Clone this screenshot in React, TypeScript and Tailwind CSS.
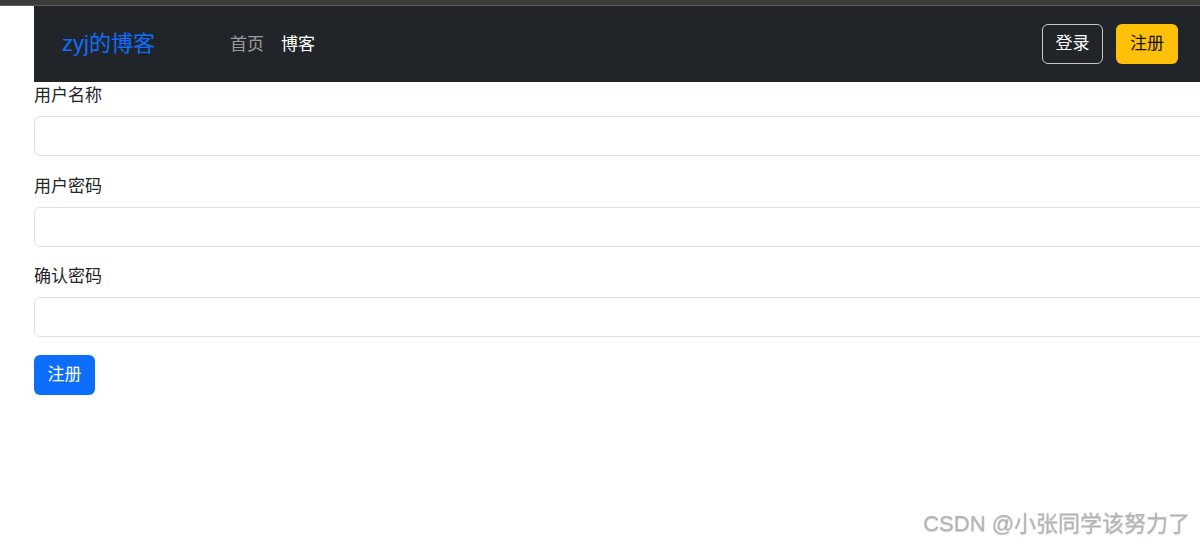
import React from "react";

const fontClass = "font-['Liberation_Sans','Noto_Sans_CJK_SC',sans-serif]";

const inputClass =
  "block h-10 w-[1180px] rounded-md border border-[#dee2e6] bg-white px-3 text-[17px] text-[#212529] outline-none";

function Field({ label, type = "text", first }: { label: string; type?: string; first?: boolean }) {
  return (
    <div className={first ? "pt-[2px]" : "pt-[18.5px]"}>
      <label className="mb-2 block h-6 text-[17px] leading-6 text-[#212529]">{label}</label>
      <input type={type} className={inputClass} />
    </div>
  );
}

export default function App() {
  return (
    <div className={"relative h-[543px] w-full overflow-hidden bg-white " + fontClass}>
      {/* browser chrome strip */}
      <div className="h-[6px] w-full border-b border-[#5a5a5a] bg-[#3b3b3b]" />

      <div className="flex">
        <div className="w-[34px] shrink-0" />
        <div className="min-w-0 flex-1">
          <nav className="flex h-[76px] items-center bg-[#212529] pl-[28px] pr-[22px]">
            <a className="text-[22px] leading-none text-[#0d6efd]">zyj的博客</a>
            <div className="ml-[75px] flex items-center gap-[17px] text-[17px] leading-none">
              <a className="text-[rgba(255,255,255,0.55)]">首页</a>
              <a className="text-white">博客</a>
            </div>
            <div className="ml-auto flex items-center gap-[13px]">
              <button className="h-10 w-[61px] rounded-md border border-[#c8c8c8] text-[17px] text-white">
                登录
              </button>
              <button className="h-10 w-[62px] rounded-md bg-[#ffc107] text-[17px] text-[#111]">
                注册
              </button>
            </div>
          </nav>

          <form>
            <Field label="用户名称" first />
            <Field label="用户密码" type="password" />
            <Field label="确认密码" type="password" />
            <button
              type="button"
              className="mt-[17.5px] h-10 w-[61px] rounded-md bg-[#0d6efd] text-[17px] text-white"
            >
              注册
            </button>
          </form>
        </div>
      </div>

      <div className="absolute bottom-[8px] right-[10px] text-[22px] leading-none text-[#b4b4b4] [text-shadow:0_1px_1px_rgba(0,0,0,0.2)]">
        CSDN @小张同学该努力了
      </div>
    </div>
  );
}
